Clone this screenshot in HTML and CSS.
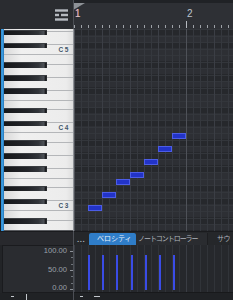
FILE: index.html
```html
<!DOCTYPE html>
<html>
<head>
<meta charset="utf-8">
<link rel="stylesheet" href="styles.css">
</head>
<body>
<div class="app">
  <div class="corner">
    <svg class="menu-icon" width="13" height="12" viewBox="0 0 13 12">
      <rect x="0" y="0.3" width="13" height="2.4" fill="#b6bac0"/>
      <rect x="0" y="4.8" width="4" height="2.4" fill="#b6bac0"/>
      <rect x="6" y="4.8" width="7" height="2.4" fill="#b6bac0"/>
      <rect x="0" y="9.3" width="13" height="2.4" fill="#b6bac0"/>
    </svg>
  </div>
  <div class="sep"></div>
  <div class="ruler">
    <div class="ruler-top"></div>
    <svg class="loop-marker" width="12" height="7" viewBox="0 0 12 7"><polygon points="0,0 11,0 0,6.5" fill="#8e9297"/></svg>
    <span class="bar-num bar-one" style="left:1px">1</span>
    <span class="bar-num" style="left:113px">2</span>
    <span class="major-tick" style="left:112px"></span>
  </div>

  <div class="keys">
    <div class="keys-strip"></div>
    <div class="keys-col">
      <div class="wk wk-top"></div>
      <div class="wk wk-l"></div>
      <div class="wk wk-s"><span class="klabel">C5</span></div>
      <div class="wk wk-s"></div>
      <div class="wk wk-l"></div>
      <div class="wk wk-l"></div>
      <div class="wk wk-s"></div>
      <div class="wk wk-s"></div>
      <div class="wk wk-l"></div>
      <div class="wk wk-s"><span class="klabel">C4</span></div>
      <div class="wk wk-s"></div>
      <div class="wk wk-l"></div>
      <div class="wk wk-l"></div>
      <div class="wk wk-s"></div>
      <div class="wk wk-s"></div>
      <div class="wk wk-l"></div>
      <div class="wk wk-s"><span class="klabel">C3</span></div>
      <div class="wk wk-s"></div>
      <div class="wk wk-s wk-last"></div>

      <div class="bk" style="top:0.5px"></div>
      <div class="bk" style="top:13.5px"></div>
      <div class="bk" style="top:33px"></div>
      <div class="bk" style="top:46px"></div>
      <div class="bk" style="top:59px"></div>
      <div class="bk" style="top:78.5px"></div>
      <div class="bk" style="top:91.5px"></div>
      <div class="bk" style="top:111px"></div>
      <div class="bk" style="top:124px"></div>
      <div class="bk" style="top:137px"></div>
      <div class="bk" style="top:156.5px"></div>
      <div class="bk" style="top:169.5px"></div>
      <div class="bk" style="top:189px"></div>
    </div>
  </div>
  <div class="sep sep-keys"></div>
  <div class="grid">
    <div class="note" style="left:14px;top:175.5px"></div>
    <div class="note" style="left:28px;top:162.5px"></div>
    <div class="note" style="left:42px;top:149.5px"></div>
    <div class="note" style="left:56px;top:143px"></div>
    <div class="note" style="left:70px;top:130px"></div>
    <div class="note" style="left:84px;top:117px"></div>
    <div class="note" style="left:98px;top:104px"></div>
  </div>

  <div class="tabs-left"></div>
  <div class="sep"></div>
  <div class="tabs">
    <span class="tab-more">...</span>
    <span class="tab tab-active">ベロシティ</span>
    <span class="tab tab-nc">ノートコントローラー</span>
    <span class="tab tab-sv">サウ</span>
  </div>

  <div class="vscale">
    <div class="vlabels">
      <span>100.00</span>
      <span>50.00</span>
      <span>0.00</span>
    </div>
    <div class="vticks"></div>
  </div>
  <div class="sep"></div>
  <div class="vlane">
    <div class="vbar" style="left:14px"></div>
    <div class="vbar" style="left:28px"></div>
    <div class="vbar" style="left:42px"></div>
    <div class="vbar" style="left:56.5px"></div>
    <div class="vbar" style="left:70.5px"></div>
    <div class="vbar" style="left:84.5px"></div>
    <div class="vbar" style="left:98.5px"></div>
  </div>

  <div class="foot-left">
    <span class="fi fi-plus"></span>
    <span class="fi fi-bar"></span>
  </div>
  <div class="sep"></div>
  <div class="foot-right">
    <span class="fi fi-dash"></span>
    <span class="fi fi-dash2"></span>
  </div>
</div>
</body>
</html>
```

FILE: styles.css
```css
html, body {
  margin: 0;
  padding: 0;
  background: #222427;
  width: 233px;
  height: 300px;
  overflow: hidden;
  font-family: "Liberation Sans", "Noto Sans CJK JP", sans-serif;
}

.app {
  display: grid;
  grid-template-columns: 73px 1px 159px;
  grid-template-rows: 29px 202px 14px 48px 7px;
  width: 233px;
  height: 300px;
}

.sep {
  background: #4c4f55;
}

.sep-keys {
  background: #8e9196;
}

/* header */
.corner {
  background: #2a2c30;
  display: flex;
  justify-content: flex-end;
  align-items: flex-start;
  padding: 9px 5px 0 0;
  box-sizing: border-box;
}

.ruler {
  position: relative;
  background-color: #2e3035;
  background-image: repeating-linear-gradient(to right, #9da1a7 0 1px, transparent 1px 7px);
  background-size: 100% 3px;
  background-position: 0 25px;
  background-repeat: no-repeat;
  overflow: hidden;
}

.ruler-top {
  height: 3px;
  background: #202226;
}

.loop-marker {
  position: absolute;
  left: 0;
  top: 3px;
}

.bar-num {
  position: absolute;
  top: 8px;
  font-size: 10px;
  line-height: 12px;
  color: #bcc4cf;
}

.bar-one {
  color: #d3c7cc;
  text-shadow: -0.6px 0 rgba(220, 60, 60, 0.8);
}

.major-tick {
  position: absolute;
  top: 21px;
  width: 1px;
  height: 7px;
  background: #b6bac0;
}

/* keyboard */
.keys {
  display: flex;
  background: #1c1d20;
  overflow: hidden;
}

.keys-strip {
  width: 3px;
  margin-left: 1px;
  background: linear-gradient(to right, #2f8ed4, #3a9ade 50%, #2673b3);
}

.keys-col {
  flex: 1;
  position: relative;
  display: flex;
  flex-direction: column;
  overflow: hidden;
}

.wk {
  flex: none;
  box-sizing: border-box;
  border-bottom: 1px solid #b4b6b9;
  background: linear-gradient(to right, #d9d9d9, #f0f0f0 25%, #ececec 90%, #dedede);
  display: flex;
  justify-content: flex-end;
  align-items: center;
  padding-right: 3px;
}

.wk-top { height: 3.25px; }
.wk-s { height: 9.75px; }
.wk-l { height: 13px; }
.wk-last { border-bottom: 1px solid #5a5c60; height: 10.25px; }

.klabel {
  font-size: 6.5px;
  font-weight: bold;
  letter-spacing: 1.6px;
  color: #42556a;
  line-height: 7px;
}

.bk {
  position: absolute;
  left: 0;
  width: 43px;
  height: 5.5px;
  box-sizing: border-box;
  border-top: 1px solid #3b3e42;
  background: linear-gradient(to right, #151618, #23252a 55%, #32353a 80%, #4d5157 93%, #1b1c1f 96%, #2b2d31);
}

/* grid */
.grid {
  position: relative;
  overflow: hidden;
  background-color: #2d2f34;
  background-image:
    repeating-linear-gradient(to right, #4e5158 0 1px, transparent 1px 112px),
    repeating-linear-gradient(to right, #3b3e45 0 1px, transparent 1px 28px),
    repeating-linear-gradient(to right, #35383e 0 1px, transparent 1px 7px),
    repeating-linear-gradient(to bottom, #33363b 0 1px, transparent 1px 6.5px),
    linear-gradient(to bottom,
      #26282c 0 6.5px,
      #2d2f34 6.5px 13px,
      #26282c 13px 19.5px,
      #2d2f34 19.5px 32.5px,
      #26282c 32.5px 39px,
      #2d2f34 39px 45.5px,
      #26282c 45.5px 52px,
      #2d2f34 52px 58.5px,
      #26282c 58.5px 65px,
      #2d2f34 65px 78px);
  background-size: auto, auto, auto, auto, 100% 78px;
}

.note {
  position: absolute;
  width: 14px;
  height: 6px;
  box-sizing: border-box;
  background: #2233c8;
  border: 1px solid #4c5de6;
}

/* tabs */
.tabs-left {
  background: #28292d;
  border-top: 1px solid #1a1b1e;
}

.tabs {
  display: flex;
  align-items: flex-end;
  background: #25272a;
  border-top: 1px solid #1a1b1e;
  overflow: hidden;
  white-space: nowrap;
}

.tab-more {
  flex: none;
  width: 15px;
  box-sizing: border-box;
  padding-left: 3px;
  font-size: 8px;
  font-weight: bold;
  line-height: 10px;
  color: #aeb3ba;
  letter-spacing: 0.5px;
}

.tab {
  flex: none;
  height: 12px;
  line-height: 12px;
  font-size: 7px;
  color: #aeb3ba;
  box-sizing: border-box;
}

.tab-active {
  width: 47px;
  padding-left: 8px;
  background: #2f7dc8;
  color: #eaf2fb;
  border-radius: 2px 2px 0 0;
}

.tab-nc {
  width: 72px;
  padding-left: 2px;
  letter-spacing: -1.05px;
  background: #2a2c30;
  border-right: 1px solid #1d1e21;
}

.tab-sv {
  padding-left: 9px;
  letter-spacing: -0.6px;
}

/* velocity */
.vscale {
  margin-left: 2px;
  box-sizing: border-box;
  border: 1px solid #1a1b1e;
  border-right: none;
  background: #2a2c30;
  display: grid;
  grid-template-columns: 1fr 3px;
  column-gap: 3px;
}

.vlabels {
  display: flex;
  flex-direction: column;
  justify-content: space-between;
  align-items: flex-end;
  padding: 1px 0 0 0;
  font-size: 7.6px;
  line-height: 8px;
  color: #9aa1aa;
}

.vticks {
  margin-top: 5px;
  height: 39px;
  background-image:
    repeating-linear-gradient(to bottom, #8d9299 0 1px, transparent 1px 19px),
    repeating-linear-gradient(to bottom, #6f747b 0 1px, transparent 1px 6.333px);
  background-size: 3px 100%, 2px 100%;
  background-position: 0 0, 1px 0;
  background-repeat: no-repeat;
}

.vlane {
  position: relative;
  background-color: #26282c;
  background-image:
    repeating-linear-gradient(to right, #3a3d44 0 1px, transparent 1px 112px),
    repeating-linear-gradient(to right, #313439 0 1px, transparent 1px 7px);
  border-bottom: 1px solid #18191b;
  box-sizing: border-box;
}

.vbar {
  position: absolute;
  top: 10px;
  width: 2.3px;
  height: 35px;
  background: #3a4ce6;
}

/* footer */
.foot-left, .foot-right {
  position: relative;
  background: #202225;
}

.fi {
  position: absolute;
  background: #c3c7cc;
}

.fi-plus { left: 11px; top: 3px; width: 3px; height: 1px; }
.fi-bar { left: 26px; top: 1px; width: 1px; height: 6px; }
.fi-dash { left: 6px; top: 3px; width: 3px; height: 1px; }
.fi-dash2 { left: 20px; top: 3px; width: 6px; height: 1px; }
```
